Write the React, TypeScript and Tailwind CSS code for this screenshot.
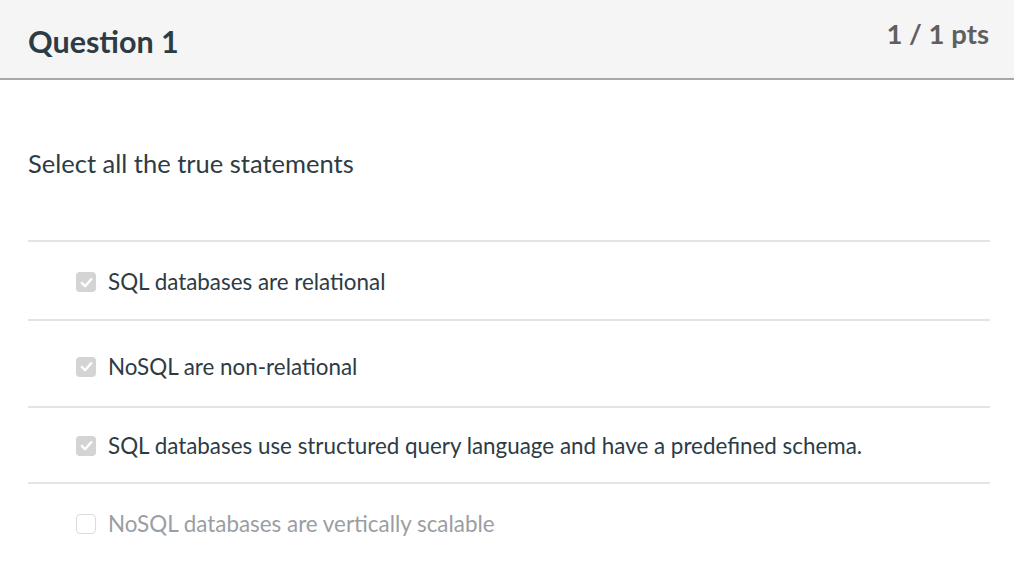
import React from "react";

const options = [
  { text: "SQL databases are relational", checked: true, h: "h-[79px]", pt: "pt-[3px]" },
  { text: "NoSQL are non-relational", checked: true, h: "h-[87px]", pt: "pt-[6px]" },
  { text: "SQL databases use structured query language and have a predefined schema.", checked: true, h: "h-[76px]", pt: "pt-[1px]" },
  { text: "NoSQL databases are vertically scalable", checked: false, h: "h-[80px]", pt: "pt-0" },
];

function Box({ checked }: { checked: boolean }) {
  if (checked) {
    return (
      <span className="flex h-[20px] w-[20px] shrink-0 items-center justify-center rounded-[4px] bg-[#d4d4d4]">
        <svg width="15" height="15" viewBox="0 0 16 16" fill="none">
          <path d="M3 8.5 L6.5 12 L13 4.5" stroke="#ffffff" strokeWidth="2.6" strokeLinecap="round" strokeLinejoin="round" />
        </svg>
      </span>
    );
  }
  return <span className="h-[20px] w-[20px] shrink-0 rounded-[4px] border border-[#dcdcdc] bg-white" />;
}

export default function App() {
  return (
    <div className="min-h-[574px] w-[1014px] bg-white" style={{ fontFamily: "Lato, 'Noto Sans', sans-serif" }}>
      <div className="flex h-[80px] items-start justify-between border-b-2 border-[#a8a8a8] bg-[#f5f5f5] pl-[28px] pr-[25px]">
        <h1 className="mt-[21px] text-[30.5px] font-bold leading-[40px] text-[#2d3b45]">Question 1</h1>
        <div className="mt-[16px] text-[27.5px] font-bold leading-[36px] text-[#5f5f5f]">1 / 1 pts</div>
      </div>
      <div className="pl-[28px] pr-[24px]">
        <p className="mt-[66px] text-[25.5px] leading-[34px] text-[#2d3b45]">Select all the true statements</p>
        <div className="mt-[60px] border-t-2 border-[#e4e4e4]">
          {options.map((o, i) => (
            <div
              key={i}
              className={`flex items-center gap-[12px] pl-[48px] ${o.pt} ${o.h} ${i < 3 ? "border-b-2 border-[#e4e4e4]" : ""}`}
            >
              <Box checked={o.checked} />
              <span className={`text-[22.4px] leading-[30px] ${o.checked ? "text-[#2d3b45]" : "text-[#9a9ea2]"}`}>{o.text}</span>
            </div>
          ))}
        </div>
      </div>
    </div>
  );
}
